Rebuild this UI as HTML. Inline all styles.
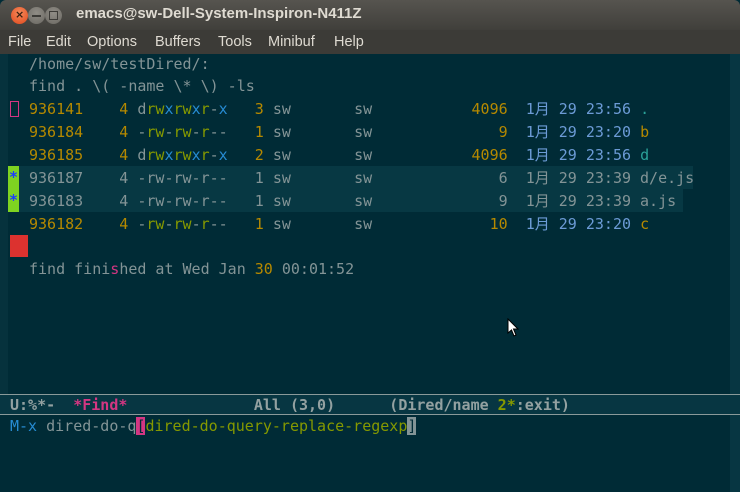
<!DOCTYPE html>
<html><head><meta charset="utf-8"><style>
*{margin:0;padding:0;box-sizing:border-box}
body{width:740px;height:492px;overflow:hidden;background:#002b36;position:relative;font-family:"DejaVu Sans Mono","Liberation Mono","Noto Sans CJK SC",monospace;font-size:15px;color:#839496}
#title{position:absolute;left:0;top:0;width:740px;height:30px;background:linear-gradient(#56544f,#403f3b);border-radius:6px 6px 0 0}
#title .t{position:absolute;left:76px;top:5px;font-family:"Liberation Sans","DejaVu Sans",sans-serif;font-weight:bold;font-size:15px;color:#dfdbd2}
.btn{position:absolute;top:7px;width:17px;height:17px;border-radius:50%}
#menu{position:absolute;left:0;top:30px;width:740px;height:24px;background:#3c3b37;font-family:"Liberation Sans","DejaVu Sans",sans-serif;font-size:14.5px;color:#dfdbd2}
#menu span{position:absolute;top:4px}
.lf{position:absolute;left:0;top:54px;width:8px;height:340px;background:#06323d}
.rf{position:absolute;left:730px;top:54px;width:10px;height:438px;background:#073642}
.l{position:absolute;left:29px;white-space:pre;line-height:20px}
.y{color:#b58900}.g{color:#859900}.b{color:#268bd2}.c{color:#2aa198}.m{color:#d33682}.d{color:#6c9bd6}
.hl{position:absolute;left:8px;width:685px;height:23px;background:#073843}
</style></head><body>
<div id="title">
<div class="btn" style="left:11px;background:radial-gradient(circle at 50% 35%,#f58a5b,#e0481c);"></div>
<div style="position:absolute;left:15px;top:8px;font:bold 11px 'DejaVu Sans';color:#3a2010">×</div>
<div class="btn" style="left:28px;background:radial-gradient(circle at 50% 35%,#908d86,#6a6862)"></div>
<div style="position:absolute;left:32px;top:15px;width:9px;height:2px;background:#3c3b37"></div>
<div class="btn" style="left:45px;background:radial-gradient(circle at 50% 35%,#908d86,#6a6862)"></div>
<div style="position:absolute;left:49px;top:11px;width:9px;height:9px;border:1.5px solid #3c3b37"></div>
<div class="t">emacs@sw-Dell-System-Inspiron-N411Z</div>
</div>
<div id="menu"><span style="left:8px">File</span><span style="left:46px">Edit</span><span style="left:87px">Options</span><span style="left:155px">Buffers</span><span style="left:218px">Tools</span><span style="left:268px">Minibuf</span><span style="left:334px">Help</span></div>
<div class="lf"></div><div class="rf"></div>
<div class="hl" style="top:166px"></div><div class="hl" style="top:189px;width:675px"></div>
<div style="position:absolute;left:10px;top:101px;width:9px;height:16px;border:1px solid #d33682"></div>
<div style="position:absolute;left:8px;top:166px;width:11px;height:46px;background:#7ed321"></div>
<div style="position:absolute;left:9px;top:166px;color:#1a3cff;line-height:23px;font-weight:bold">*<br>*</div>
<div style="position:absolute;left:10px;top:235px;width:18px;height:22px;background:#dc322f"></div>
<div class="l" style="top:54px">/home/sw/testDired/:</div>
<div class="l" style="top:76px">find . \( -name \* \) -ls</div>
<div class="l" style="top:99px"><span class="y">936141    4</span> d<span class="g">rw</span><span class="b">x</span><span class="g">rw</span><span class="b">x</span><span class="g">r</span>-<span class="b">x</span>   <span class="y">3</span> sw       sw           <span class="y">4096</span>  <span class="d">1月 29 23:56</span> <span class="c">.</span></div>
<div class="l" style="top:122px"><span class="y">936184    4</span> -<span class="g">rw</span>-<span class="g">rw</span>-<span class="g">r</span>--   <span class="y">1</span> sw       sw              <span class="y">9</span>  <span class="d">1月 29 23:20</span> <span class="y">b</span></div>
<div class="l" style="top:145px"><span class="y">936185    4</span> d<span class="g">rw</span><span class="b">x</span><span class="g">rw</span><span class="b">x</span><span class="g">r</span>-<span class="b">x</span>   <span class="y">2</span> sw       sw           <span class="y">4096</span>  <span class="d">1月 29 23:56</span> <span class="c">d</span></div>
<div class="l" style="top:168px">936187    4 -rw-rw-r--   1 sw       sw              6  1月 29 23:39 d/e.js</div>
<div class="l" style="top:191px">936183    4 -rw-rw-r--   1 sw       sw              9  1月 29 23:39 a.js</div>
<div class="l" style="top:214px"><span class="y">936182    4</span> -<span class="g">rw</span>-<span class="g">rw</span>-<span class="g">r</span>--   <span class="y">1</span> sw       sw             <span class="y">10</span>  <span class="d">1月 29 23:20</span> <span class="y">c</span></div>
<div class="l" style="top:259px">find fini<span class="m">s</span>hed at Wed Jan <span class="y">30</span> 00:01:52</div>
<svg style="position:absolute;left:507px;top:318px" width="14" height="20" viewBox="0 0 14 20"><path d="M1 1 L1 15 L4.5 12 L7 18 L9 17 L6.5 11 L11 11 Z" fill="#fff" stroke="#000" stroke-width="1"/></svg>
<div style="position:absolute;left:0;top:394px;width:740px;height:21px;background:#073642;border-top:1px solid #8a9a9a;border-bottom:1px solid #8a9a9a"></div>
<div class="l" style="left:10px;top:395px;font-weight:bold;color:#93a1a1">U:%*-  <span class="m">*Find*</span>              All (3,0)      (Dired/name <span class="g">2*</span>:exit)</div>
<div class="l" style="left:10px;top:416px"><span class="b">M-x</span> dired-do-q<span style="background:#d33682;color:#002b36">[</span><span class="g">dired-do-query-replace-regexp</span><span style="background:#839496;color:#002b36">]</span></div>
</body></html>
